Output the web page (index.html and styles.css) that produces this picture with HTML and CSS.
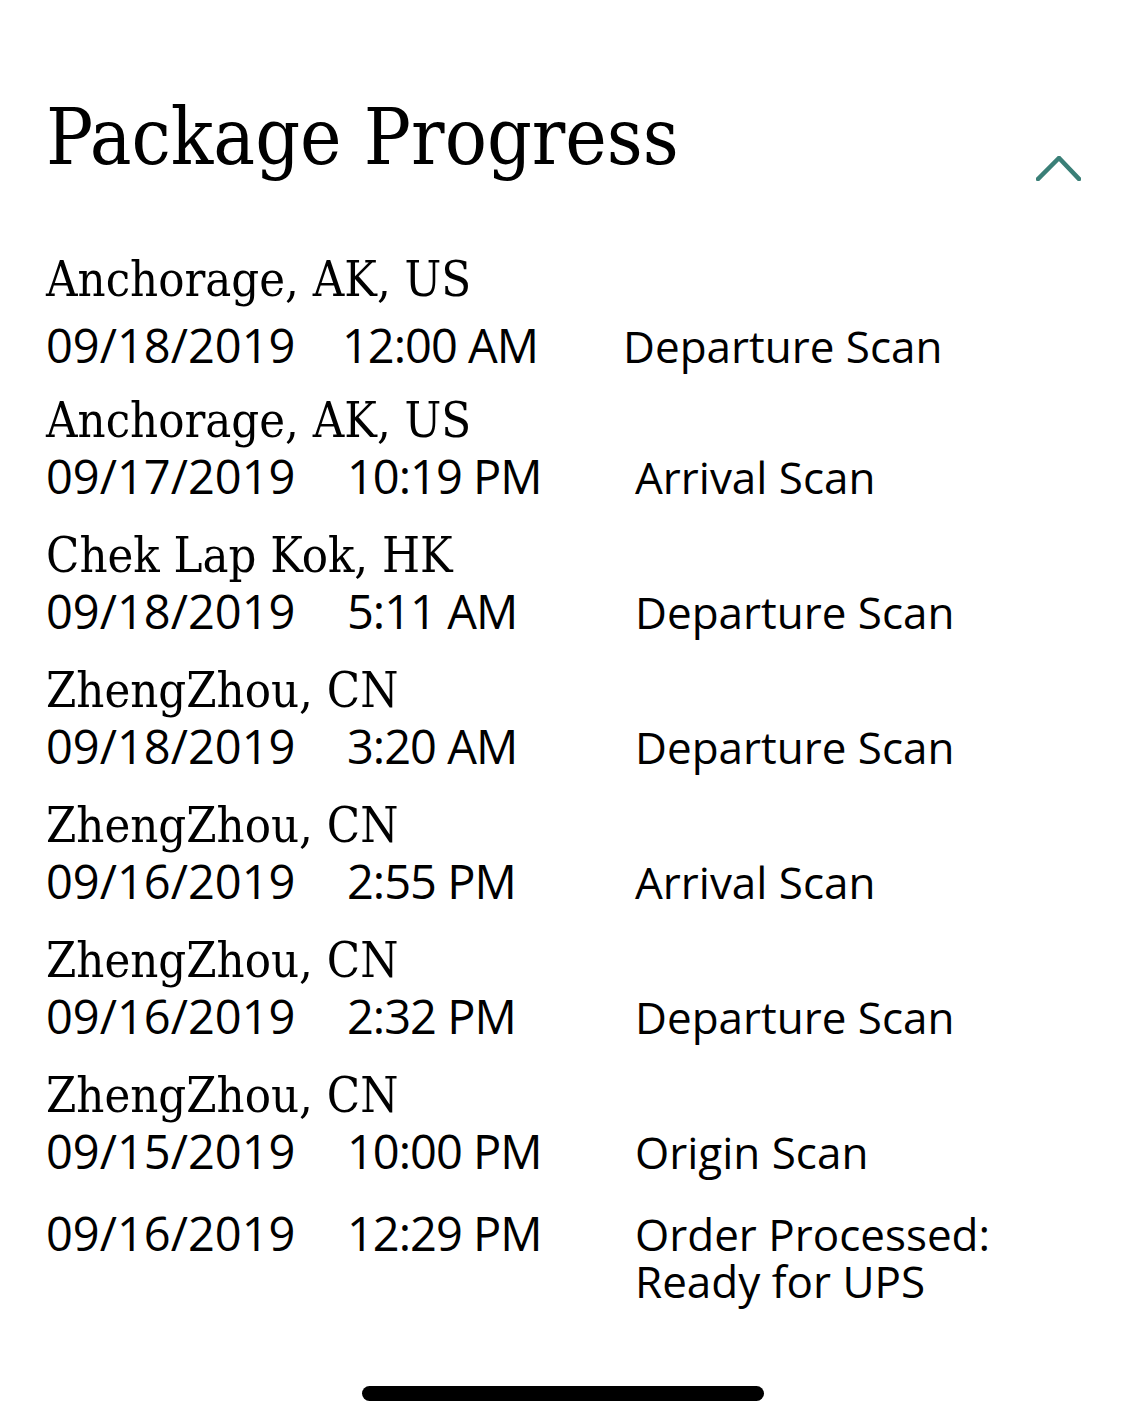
FILE: index.html
```html
<!DOCTYPE html>
<html lang="en">
<head>
<meta charset="utf-8">
<title>Package Progress</title>
<link rel="stylesheet" href="styles.css">
</head>
<body>
<main class="screen">
  <header class="header">
    <h1 class="title">Package Progress</h1>
    <svg class="chevron" width="45" height="25" viewBox="0 0 45 25" aria-hidden="true">
      <path d="M2 23 L23 2 L43 23" fill="none" stroke="#3a7f77" stroke-width="4.5" stroke-linecap="square" stroke-linejoin="miter"/>
    </svg>
  </header>

  <section class="events">
    <div class="event event--first">
      <div class="loc">Anchorage, AK, US</div>
      <div class="detail">
        <span class="date">09/18/2019</span>
        <span class="time">12:00 AM</span>
        <span class="status">Departure Scan</span>
      </div>
    </div>
    <div class="event">
      <div class="loc">Anchorage, AK, US</div>
      <div class="detail">
        <span class="date">09/17/2019</span>
        <span class="time">10:19 PM</span>
        <span class="status">Arrival Scan</span>
      </div>
    </div>
    <div class="event">
      <div class="loc">Chek Lap Kok, HK</div>
      <div class="detail">
        <span class="date">09/18/2019</span>
        <span class="time">5:11 AM</span>
        <span class="status">Departure Scan</span>
      </div>
    </div>
    <div class="event">
      <div class="loc">ZhengZhou, CN</div>
      <div class="detail">
        <span class="date">09/18/2019</span>
        <span class="time">3:20 AM</span>
        <span class="status">Departure Scan</span>
      </div>
    </div>
    <div class="event">
      <div class="loc">ZhengZhou, CN</div>
      <div class="detail">
        <span class="date">09/16/2019</span>
        <span class="time">2:55 PM</span>
        <span class="status">Arrival Scan</span>
      </div>
    </div>
    <div class="event">
      <div class="loc">ZhengZhou, CN</div>
      <div class="detail">
        <span class="date">09/16/2019</span>
        <span class="time">2:32 PM</span>
        <span class="status">Departure Scan</span>
      </div>
    </div>
    <div class="event">
      <div class="loc">ZhengZhou, CN</div>
      <div class="detail">
        <span class="date">09/15/2019</span>
        <span class="time">10:00 PM</span>
        <span class="status">Origin Scan</span>
      </div>
    </div>
    <div class="event event--last">
      <div class="detail">
        <span class="date">09/16/2019</span>
        <span class="time">12:29 PM</span>
        <span class="status">Order Processed: Ready for UPS</span>
      </div>
    </div>
  </section>

  <div class="home-indicator"></div>
</main>
</body>
</html>
```

FILE: styles.css
```css
* {
  box-sizing: border-box;
}

html, body {
  margin: 0;
  padding: 0;
  background: #ffffff;
}

body {
  color: #000000;
  font-family: "Open Sans", "Liberation Sans", sans-serif;
}

.screen {
  position: relative;
  width: 1125px;
  height: 1425px;
  overflow: hidden;
  padding: 100px 44px 0 46px;
}

.header {
  display: flex;
  justify-content: space-between;
  align-items: flex-start;
}

.title {
  margin: 0;
  font-family: "DejaVu Serif Condensed", "DejaVu Serif", "Liberation Serif", serif;
  font-stretch: condensed;
  font-weight: normal;
  font-size: 78px;
  line-height: 75px;
  letter-spacing: 0;
}

.chevron {
  display: block;
  margin-top: 56px;
}

.events {
  display: flex;
  flex-direction: column;
  gap: 22px;
  margin-top: 70px;
}

.loc {
  font-family: "DejaVu Serif Condensed", "DejaVu Serif", "Liberation Serif", serif;
  font-stretch: condensed;
  font-size: 48.5px;
  line-height: 56px;
}

.detail {
  display: grid;
  grid-template-columns: 301px 288px 400px;
  align-items: baseline;
}

.date,
.time {
  font-size: 47px;
  line-height: 57px;
}

.time {
  letter-spacing: -1px;
}

.status {
  font-size: 44px;
  line-height: 47px;
}

.event--first .loc {
  margin-bottom: 10px;
}

.event--first .detail {
  grid-template-columns: 296px 281px 400px;
}

.event--first {
  margin-bottom: -4px;
}

.event--last {
  margin-top: 3px;
}

.event--last .status {
  max-width: 370px;
}

.home-indicator {
  position: absolute;
  left: 362px;
  bottom: 24px;
  width: 402px;
  height: 15px;
  border-radius: 8px;
  background: #000000;
}
```
